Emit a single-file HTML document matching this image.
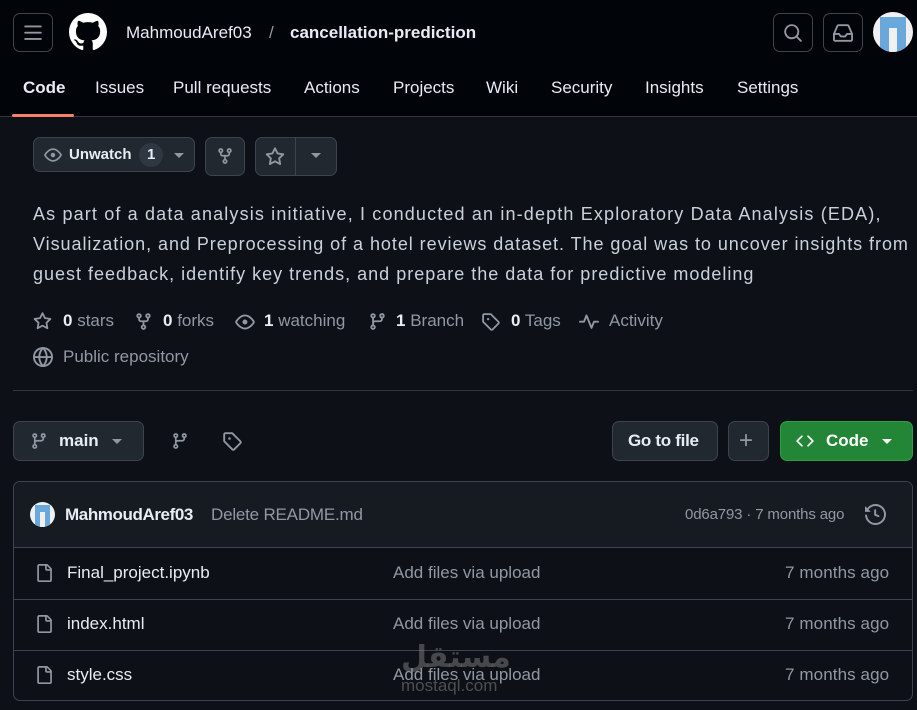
<!DOCTYPE html>
<html><head><meta charset="utf-8">
<style>
*{box-sizing:border-box;margin:0;padding:0}
body{width:917px;height:710px;overflow:hidden;background:#0d1117;color:#e6edf3;font-family:"Liberation Sans",sans-serif;position:relative}
.abs{position:absolute}
.hdr{position:absolute;left:0;top:0;width:917px;height:117px;background:#010409;border-bottom:1px solid #30363d}
.btn{position:absolute;border:1px solid #3d444d;border-radius:7px;background:#212830}
.hb{position:absolute;border:1px solid #3d444d;border-radius:7px;background:transparent}
svg{position:absolute}
.nav{position:absolute;top:78px;font-size:17px;color:#e6edf3}
.muted{color:#9198a1}
.t{position:absolute;white-space:nowrap}
</style></head><body>
<div class="hdr">
  <div class="hb" style="left:13px;top:13px;width:40px;height:39px"></div>
  <svg style="left:23px;top:23px" width="20" height="20" viewBox="0 0 16 16"><path fill="#9198a1" d="M1 2.75A.75.75 0 0 1 1.750 2h12.5a.75.75 0 0 1 0 1.5H1.75A.75.75 0 0 1 1 2.75Zm0 5A.75.75 0 0 1 1.75 7h12.5a.75.75 0 0 1 0 1.5H1.75A.75.75 0 0 1 1 7.75ZM1.75 12h12.5a.75.75 0 0 1 0 1.5H1.75a.75.75 0 0 1 0-1.5Z"/></svg>
  <svg style="left:69px;top:13px" width="38" height="38" viewBox="0 0 16 16"><path fill="#fff" d="M8 0c4.42 0 8 3.58 8 8a8.013 8.013 0 0 1-5.45 7.590c-.4.08-.55-.17-.55-.38 0-.27.01-1.130.01-2.2 0-.75-.25-1.23-.54-1.48 1.78-.2 3.650-.88 3.650-3.950 0-.88-.31-1.590-.82-2.150.08-.2.36-1.020-.08-2.120 0 0-.67-.22-2.2.82-.64-.18-1.320-.27-2-.27-.68 0-1.360.09-2 .27-1.530-1.030-2.2-.82-2.2-.82-.44 1.1-.16 1.920-.08 2.120-.51.56-.82 1.280-.82 2.150 0 3.060 1.860 3.750 3.640 3.950-.23.2-.44.55-.51 1.070-.46.21-1.610.55-2.330-.66-.15-.24-.6-.83-1.230-.82-.67.01-.27.38.01.53.34.19.73.9.82 1.130.16.45.68 1.310 2.690.94 0 .67.01 1.3.01 1.490 0 .21-.15.45-.55.38A7.995 7.995 0 0 1 0 8c0-4.420 3.580-8 8-8Z"/></svg>
  <div class="t" style="left:126px;top:23px;font-size:17px">MahmoudAref03</div>
  <div class="t muted" style="left:269px;top:23px;font-size:17px">/</div>
  <div class="t" style="left:290px;top:23px;font-size:17px;font-weight:bold">cancellation-prediction</div>
  <div class="hb" style="left:773px;top:13px;width:40px;height:39px"></div>
  <svg style="left:783px;top:23px" width="20" height="20" viewBox="0 0 16 16"><path fill="#9198a1" d="M10.68 11.74a6 6 0 0 1-7.922-8.982 6 6 0 0 1 8.982 7.922l3.04 3.04a.749.749 0 1 1-1.06 1.06l-3.04-3.04ZM11.5 7a4.499 4.499 0 1 0-8.997 0A4.499 4.499 0 0 0 11.5 7Z"/></svg>
  <div class="hb" style="left:823px;top:13px;width:40px;height:39px"></div>
  <svg style="left:833px;top:23px" width="20" height="20" viewBox="0 0 16 16"><path fill="#9198a1" d="M2.8 2.06A1.75 1.75 0 0 1 4.41 1h7.18c.7 0 1.333.417 1.61 1.06l2.74 6.395c.04.093.06.194.06.295v4.5A1.75 1.75 0 0 1 14.25 15H1.75A1.75 1.75 0 0 1 0 13.25v-4.5c0-.101.02-.202.06-.295Zm1.61.44a.25.25 0 0 0-.23.152L1.887 8H4.75a.75.75 0 0 1 .6.3L6.625 10h2.75l1.275-1.7a.75.75 0 0 1 .6-.3h2.863L11.82 2.652a.25.25 0 0 0-.23-.152Zm10.09 7h-2.875l-1.275 1.7a.75.75 0 0 1-.6.3h-3.5a.75.75 0 0 1-.6-.3L4.375 9.5H1.5v3.75c0 .138.112.25.25.25h12.5a.25.25 0 0 0 .25-.25Z"/></svg>
  <div class="abs" style="left:873px;top:12px;width:40px;height:40px;border-radius:50%;background:#f0f0f0;overflow:hidden">
    <div class="abs" style="left:7px;top:5px;width:26px;height:35px;background:#6aa7db"></div>
    <div class="abs" style="left:16px;top:16px;width:8px;height:24px;background:#f0f0f0"></div>
  </div>
  <div class="nav" style="left:23px;font-weight:bold">Code</div>
  <div class="nav" style="left:95px">Issues</div>
  <div class="nav" style="left:173px">Pull requests</div>
  <div class="nav" style="left:304px">Actions</div>
  <div class="nav" style="left:393px">Projects</div>
  <div class="nav" style="left:486px">Wiki</div>
  <div class="nav" style="left:551px">Security</div>
  <div class="nav" style="left:645px">Insights</div>
  <div class="nav" style="left:737px">Settings</div>
  <div class="abs" style="left:12px;top:114px;width:62px;height:3px;background:#f78166;border-radius:2px"></div>
</div>

<div class="btn" style="left:33px;top:137px;width:162px;height:35px"></div>
<svg style="left:44px;top:146px" width="18" height="18" viewBox="0 0 16 16"><path fill="#9198a1" d="M8 2c1.981 0 3.671.992 4.933 2.078 1.27 1.091 2.187 2.345 2.637 3.023a1.62 1.62 0 0 1 0 1.798c-.45.678-1.367 1.932-2.637 3.023C11.67 13.008 9.981 14 8 14c-1.981 0-3.671-.992-4.933-2.078C1.797 10.83.88 9.576.43 8.898a1.62 1.62 0 0 1 0-1.798c.45-.677 1.367-1.931 2.637-3.022C4.33 2.992 6.019 2 8 2ZM1.679 7.932a.12.12 0 0 0 0 .136c.411.622 1.241 1.75 2.366 2.717C5.176 11.758 6.527 12.5 8 12.5c1.473 0 2.825-.742 3.955-1.715 1.124-.967 1.954-2.096 2.366-2.717a.12.12 0 0 0 0-.136c-.412-.621-1.242-1.750-2.366-2.717C10.824 4.242 9.473 3.5 8 3.5c-1.473 0-2.825.742-3.955 1.715-1.124.967-1.954 2.096-2.366 2.717ZM8 10a2 2 0 1 1-.001-3.999A2 2 0 0 1 8 10Z"/></svg>
<div class="t" style="left:69px;top:146px;font-size:15px;font-weight:bold">Unwatch</div>
<div class="abs" style="left:139px;top:143px;width:24px;height:24px;border-radius:12px;background:#2f3742"></div>
<div class="t" style="left:147px;top:146px;font-size:15px;font-weight:bold">1</div>
<div class="abs" style="left:174px;top:153px;border-left:5px solid transparent;border-right:5px solid transparent;border-top:5px solid #9198a1"></div>
<div class="btn" style="left:205px;top:137px;width:40px;height:39px"></div>
<svg style="left:216px;top:147px" width="18" height="18" viewBox="0 0 16 16"><path fill="#9198a1" d="M5 5.372v.878c0 .414.336.75.75.75h4.5a.75.75 0 0 0 .75-.75v-.878a2.25 2.25 0 1 1 1.5 0v.878a2.25 2.25 0 0 1-2.25 2.25h-1.5v2.128a2.251 2.251 0 1 1-1.5 0V8.5h-1.5A2.25 2.25 0 0 1 3.5 6.25v-.878a2.25 2.25 0 1 1 1.5 0ZM5 3.25a.75.75 0 1 0-1.5 0 .75.75 0 0 0 1.5 0Zm6.75.75a.75.75 0 1 0 0-1.5.75.75 0 0 0 0 1.5Zm-3 8.75a.75.75 0 1 0-1.5 0 .75.75 0 0 0 1.5 0Z"/></svg>
<div class="btn" style="left:255px;top:137px;width:82px;height:39px"></div>
<div class="abs" style="left:295px;top:138px;width:1px;height:37px;background:#3d444d"></div>
<svg style="left:265px;top:147px" width="20" height="20" viewBox="0 0 16 16"><path fill="#9198a1" d="M8 .25a.75.75 0 0 1 .673.418l1.882 3.815 4.21.612a.75.75 0 0 1 .416 1.279l-3.046 2.97.719 4.192a.751.751 0 0 1-1.088.791L8 12.347l-3.766 1.98a.75.75 0 0 1-1.088-.79l.72-4.194L.818 6.374a.75.75 0 0 1 .416-1.28l4.21-.611L7.327.668A.75.75 0 0 1 8 .25Zm0 2.445L6.615 5.5a.75.75 0 0 1-.564.41l-3.097.45 2.24 2.184a.75.75 0 0 1 .216.664l-.528 3.084 2.769-1.456a.75.75 0 0 1 .698 0l2.77 1.456-.53-3.084a.75.75 0 0 1 .216-.664l2.24-2.183-3.096-.45a.75.75 0 0 1-.564-.41L8 2.694Z"/></svg>
<div class="abs" style="left:311px;top:153px;border-left:5px solid transparent;border-right:5px solid transparent;border-top:5px solid #9198a1"></div>

<div class="abs" style="left:33px;top:199px;font-size:18px;line-height:30px;color:#c9d1d9;white-space:nowrap">
<div style="letter-spacing:1.15px">As part of a data analysis initiative, I conducted an in-depth Exploratory Data Analysis (EDA),</div>
<div style="letter-spacing:0.95px">Visualization, and Preprocessing of a hotel reviews dataset. The goal was to uncover insights from</div>
<div style="letter-spacing:1.0px">guest feedback, identify key trends, and prepare the data for predictive modeling</div>
</div>

<div style="position:absolute;left:33px;top:311px;font-size:17px;color:#9198a1;white-space:nowrap">
<svg style="left:0;top:1px" width="19" height="19" viewBox="0 0 16 16"><path fill="#9198a1" d="M8 .25a.75.75 0 0 1 .673.418l1.882 3.815 4.21.612a.75.75 0 0 1 .416 1.279l-3.046 2.97.719 4.192a.751.751 0 0 1-1.088.791L8 12.347l-3.766 1.98a.75.75 0 0 1-1.088-.79l.72-4.194L.818 6.374a.75.75 0 0 1 .416-1.28l4.21-.611L7.327.668A.75.75 0 0 1 8 .25Zm0 2.445L6.615 5.5a.75.75 0 0 1-.564.41l-3.097.45 2.24 2.184a.75.75 0 0 1 .216.664l-.528 3.084 2.769-1.456a.75.75 0 0 1 .698 0l2.77 1.456-.53-3.084a.75.75 0 0 1 .216-.664l2.24-2.183-3.096-.45a.75.75 0 0 1-.564-.41L8 2.694Z"/></svg>
<span class="t" style="left:30px"><b style="color:#e6edf3">0</b> stars</span>
<svg style="left:101px;top:1px" width="19" height="19" viewBox="0 0 16 16"><path fill="#9198a1" d="M5 5.372v.878c0 .414.336.75.75.75h4.5a.75.75 0 0 0 .75-.75v-.878a2.25 2.25 0 1 1 1.5 0v.878a2.25 2.25 0 0 1-2.25 2.25h-1.5v2.128a2.251 2.251 0 1 1-1.5 0V8.5h-1.5A2.25 2.25 0 0 1 3.5 6.25v-.878a2.25 2.25 0 1 1 1.5 0ZM5 3.25a.75.75 0 1 0-1.5 0 .75.75 0 0 0 1.5 0Zm6.75.75a.75.75 0 1 0 0-1.5.75.75 0 0 0 0 1.5Zm-3 8.75a.75.75 0 1 0-1.5 0 .75.75 0 0 0 1.5 0Z"/></svg>
<span class="t" style="left:130px"><b style="color:#e6edf3">0</b> forks</span>
<svg style="left:202px;top:1px" width="20" height="20" viewBox="0 0 16 16"><path fill="#9198a1" d="M8 2c1.981 0 3.671.992 4.933 2.078 1.27 1.091 2.187 2.345 2.637 3.023a1.62 1.62 0 0 1 0 1.798c-.45.678-1.367 1.932-2.637 3.023C11.67 13.008 9.981 14 8 14c-1.981 0-3.671-.992-4.933-2.078C1.797 10.83.88 9.576.43 8.898a1.62 1.62 0 0 1 0-1.798c.45-.677 1.367-1.931 2.637-3.022C4.33 2.992 6.019 2 8 2ZM1.679 7.932a.12.12 0 0 0 0 .136c.411.622 1.241 1.75 2.366 2.717C5.176 11.758 6.527 12.5 8 12.5c1.473 0 2.825-.742 3.955-1.715 1.124-.967 1.954-2.096 2.366-2.717a.12.12 0 0 0 0-.136c-.412-.621-1.242-1.750-2.366-2.717C10.824 4.242 9.473 3.5 8 3.5c-1.473 0-2.825.742-3.955 1.715-1.124.967-1.954 2.096-2.366 2.717ZM8 10a2 2 0 1 1-.001-3.999A2 2 0 0 1 8 10Z"/></svg>
<span class="t" style="left:231px"><b style="color:#e6edf3">1</b> watching</span>
<svg style="left:335px;top:1px" width="19" height="19" viewBox="0 0 16 16"><path fill="#9198a1" d="M9.5 3.25a2.25 2.25 0 1 1 3 2.122V6A2.5 2.5 0 0 1 10 8.5H6a1 1 0 0 0-1 1v1.128a2.251 2.251 0 1 1-1.5 0V5.372a2.25 2.25 0 1 1 1.5 0v1.836A2.493 2.493 0 0 1 6 7h4a1 1 0 0 0 1-1v-.628A2.25 2.25 0 0 1 9.5 3.25Zm-6 0a.75.75 0 1 0 1.5 0 .75.75 0 0 0-1.5 0Zm8.25-.75a.75.75 0 1 0 0 1.5.75.75 0 0 0 0-1.5ZM4.25 12a.75.75 0 1 0 0 1.5.75.75 0 0 0 0-1.5Z"/></svg>
<span class="t" style="left:363px"><b style="color:#e6edf3">1</b> Branch</span>
<svg style="left:448px;top:1px" width="19" height="19" viewBox="0 0 16 16"><path fill="#9198a1" d="M1 7.775V2.75C1 1.784 1.784 1 2.75 1h5.025c.464 0 .91.184 1.238.513l6.25 6.25a1.75 1.75 0 0 1 0 2.474l-5.026 5.026a1.75 1.75 0 0 1-2.474 0l-6.25-6.25A1.752 1.752 0 0 1 1 7.775Zm1.5 0c0 .066.026.13.073.177l6.25 6.25a.25.25 0 0 0 .354 0l5.025-5.025a.25.25 0 0 0 0-.354l-6.25-6.25a.25.25 0 0 0-.177-.073H2.75a.25.25 0 0 0-.25.25ZM6 5a1 1 0 1 1 0 2 1 1 0 0 1 0-2Z"/></svg>
<span class="t" style="left:478px"><b style="color:#e6edf3">0</b> Tags</span>
<svg style="left:546px;top:1px" width="20" height="20" viewBox="0 0 16 16"><path fill="#9198a1" d="M6 2c.306 0 .582.187.696.471L10 10.731l1.304-3.260A.751.751 0 0 1 12 7h3.25a.75.75 0 0 1 0 1.5h-2.742l-1.812 4.528a.751.751 0 0 1-1.392 0L6 4.77 4.696 8.030A.75.75 0 0 1 4 8.5H.75a.75.75 0 0 1 0-1.5h2.742l1.812-4.529A.751.751 0 0 1 6 2Z"/></svg>
<span class="t" style="left:576px">Activity</span>
</div>
<svg style="left:33px;top:347px" width="20" height="20" viewBox="0 0 16 16"><path fill="#9198a1" d="M8 0a8 8 0 1 1 0 16A8 8 0 0 1 8 0ZM5.78 8.75a9.64 9.64 0 0 0 1.363 4.177c.255.426.542.832.857 1.215.245-.296.551-.705.857-1.215A9.64 9.64 0 0 0 10.22 8.75Zm4.44-1.5a9.64 9.64 0 0 0-1.363-4.177c-.307-.51-.612-.919-.857-1.215a9.927 9.927 0 0 0-.857 1.215A9.64 9.64 0 0 0 5.780 7.25Zm-5.944 1.5H1.543a6.507 6.507 0 0 0 4.666 5.5c-.123-.181-.24-.365-.352-.552-.715-1.192-1.437-2.874-1.581-4.948Zm-2.733-1.5h2.733c.144-2.074.866-3.756 1.58-4.948.12-.197.237-.381.353-.552a6.507 6.507 0 0 0-4.666 5.5Zm10.181 1.5c-.144 2.074-.866 3.756-1.58 4.948-.12.197-.237.381-.353.552a6.507 6.507 0 0 0 4.666-5.5Zm2.733-1.5a6.507 6.507 0 0 0-4.666-5.5c.123.181.24.365.353.552.714 1.192 1.436 2.874 1.58 4.948Z"/></svg>
<div class="t muted" style="left:63px;top:347px;font-size:17px">Public repository</div>
<div class="abs" style="left:13px;top:390px;width:900px;height:1px;background:#30363d"></div>

<div class="btn" style="left:13px;top:421px;width:131px;height:40px"></div>
<svg style="left:30px;top:432px" width="18" height="18" viewBox="0 0 16 16"><path fill="#9198a1" d="M9.5 3.25a2.25 2.25 0 1 1 3 2.122V6A2.5 2.5 0 0 1 10 8.5H6a1 1 0 0 0-1 1v1.128a2.251 2.251 0 1 1-1.5 0V5.372a2.25 2.25 0 1 1 1.5 0v1.836A2.493 2.493 0 0 1 6 7h4a1 1 0 0 0 1-1v-.628A2.25 2.25 0 0 1 9.5 3.25Zm-6 0a.75.75 0 1 0 1.5 0 .75.75 0 0 0-1.5 0Zm8.25-.75a.75.75 0 1 0 0 1.5.75.75 0 0 0 0-1.5ZM4.25 12a.75.75 0 1 0 0 1.5.75.75 0 0 0 0-1.5Z"/></svg>
<div class="t" style="left:59px;top:431px;font-size:17px;font-weight:bold">main</div>
<div class="abs" style="left:112px;top:439px;border-left:5px solid transparent;border-right:5px solid transparent;border-top:5px solid #9198a1"></div>
<svg style="left:171px;top:432px" width="18" height="18" viewBox="0 0 16 16"><path fill="#9198a1" d="M9.5 3.25a2.25 2.25 0 1 1 3 2.122V6A2.5 2.5 0 0 1 10 8.5H6a1 1 0 0 0-1 1v1.128a2.251 2.251 0 1 1-1.5 0V5.372a2.25 2.25 0 1 1 1.5 0v1.836A2.493 2.493 0 0 1 6 7h4a1 1 0 0 0 1-1v-.628A2.25 2.25 0 0 1 9.5 3.25Zm-6 0a.75.75 0 1 0 1.5 0 .75.75 0 0 0-1.5 0Zm8.25-.75a.75.75 0 1 0 0 1.5.75.75 0 0 0 0-1.5ZM4.25 12a.75.75 0 1 0 0 1.5.75.75 0 0 0 0-1.5Z"/></svg>
<svg style="left:222px;top:431px" width="20" height="20" viewBox="0 0 16 16"><path fill="#9198a1" d="M1 7.775V2.75C1 1.784 1.784 1 2.75 1h5.025c.464 0 .91.184 1.238.513l6.25 6.25a1.75 1.75 0 0 1 0 2.474l-5.026 5.026a1.75 1.75 0 0 1-2.474 0l-6.25-6.25A1.752 1.752 0 0 1 1 7.775Zm1.5 0c0 .066.026.13.073.177l6.25 6.25a.25.25 0 0 0 .354 0l5.025-5.025a.25.25 0 0 0 0-.354l-6.25-6.25a.25.25 0 0 0-.177-.073H2.75a.25.25 0 0 0-.25.25ZM6 5a1 1 0 1 1 0 2 1 1 0 0 1 0-2Z"/></svg>
<div class="btn" style="left:612px;top:421px;width:106px;height:40px"></div>
<div class="t" style="left:628px;top:431px;font-size:17px;font-weight:bold;letter-spacing:-0.3px">Go to file</div>
<div class="btn" style="left:728px;top:421px;width:41px;height:40px"></div>
<div class="t muted" style="left:739px;top:427px;font-size:24px">+</div>
<div class="abs" style="left:780px;top:421px;width:133px;height:40px;border-radius:7px;background:#238636;border:1px solid #2ea043"></div>
<svg style="left:795px;top:432px" width="20" height="18" viewBox="0 0 16 16"><path fill="#fff" d="m11.28 3.22 4.25 4.25a.75.75 0 0 1 0 1.06l-4.25 4.25a.749.749 0 0 1-1.275-.326.749.749 0 0 1 .215-.734L13.94 8l-3.72-3.72a.749.749 0 0 1 .326-1.275.749.749 0 0 1 .734.215Zm-6.56 0a.751.751 0 0 1 1.042.018.751.751 0 0 1 .018 1.042L2.06 8l3.72 3.72a.749.749 0 0 1-.326 1.275.749.749 0 0 1-.734-.215L.47 8.53a.75.75 0 0 1 0-1.06Z"/></svg>
<div class="t" style="left:826px;top:431px;font-size:17px;font-weight:bold;color:#fff">Code</div>
<div class="abs" style="left:882px;top:439px;border-left:5px solid transparent;border-right:5px solid transparent;border-top:5px solid #fff"></div>

<div class="abs" style="left:13px;top:481px;width:900px;height:220px;border:1px solid #3d444d;border-radius:7px;overflow:hidden">
  <div class="abs" style="left:0;top:0;width:898px;height:66px;background:#161b22;border-bottom:1px solid #3d444d"></div>
  <div class="abs" style="left:0;top:117px;width:898px;height:1px;background:#3d444d"></div>
  <div class="abs" style="left:0;top:168px;width:898px;height:1px;background:#3d444d"></div>
</div>
<div class="abs" style="left:30px;top:502px;width:25px;height:25px;border-radius:50%;background:#f0f0f0;overflow:hidden">
  <div class="abs" style="left:5px;top:3px;width:15px;height:22px;background:#6aa7db"></div>
  <div class="abs" style="left:10px;top:10px;width:5px;height:15px;background:#f0f0f0"></div>
</div>
<div class="t" style="left:65px;top:505px;font-size:17px;font-weight:bold;letter-spacing:-0.4px">MahmoudAref03</div>
<div class="t muted" style="left:211px;top:505px;font-size:17px;letter-spacing:-0.2px">Delete README.md</div>
<div class="t muted" style="left:685px;top:506px;font-size:15px;letter-spacing:-0.15px">0d6a793 · 7 months ago</div>
<svg style="left:865px;top:504px" width="21" height="21" viewBox="0 0 16 16"><path fill="#9198a1" d="m.427 1.927 1.215 1.215a8.002 8.002 0 1 1-1.6 5.685.75.75 0 1 1 1.493-.154 6.5 6.5 0 1 0 1.18-4.458l1.358 1.358A.25.25 0 0 1 3.896 6H.25A.25.25 0 0 1 0 5.75V2.104a.25.25 0 0 1 .427-.177ZM7.75 4a.75.75 0 0 1 .75.75v2.992l2.028.812a.75.75 0 0 1-.557 1.392l-2.5-1A.751.751 0 0 1 7 8.25v-3.5A.75.75 0 0 1 7.75 4Z"/></svg>

<div style="position:absolute;left:0;top:547px;width:917px">
 <svg style="left:35px;top:16px" width="18" height="20" viewBox="0 0 16 16"><path fill="#9198a1" d="M2 1.75C2 .784 2.784 0 3.75 0h6.586c.464 0 .909.184 1.237.513l2.914 2.914c.329.328.513.773.513 1.237v9.586A1.75 1.75 0 0 1 13.25 16h-9.5A1.75 1.75 0 0 1 2 14.25Zm1.75-.25a.25.25 0 0 0-.25.25v12.5c0 .138.112.25.25.25h9.5a.25.25 0 0 0 .25-.25V6h-2.75A1.75 1.75 0 0 1 9 4.25V1.5Zm6.75.062V4.25c0 .138.112.25.25.25h2.688l-.011-.013-2.914-2.914-.013-.011Z"/></svg>
 <div class="t" style="left:67px;top:16px;font-size:17px">Final_project.ipynb</div>
 <div class="t muted" style="left:393px;top:16px;font-size:17px">Add files via upload</div>
 <div class="t muted" style="left:785px;top:16px;font-size:17px;letter-spacing:0.1px">7 months ago</div>
</div>
<div style="position:absolute;left:0;top:598px;width:917px">
 <svg style="left:35px;top:16px" width="18" height="20" viewBox="0 0 16 16"><path fill="#9198a1" d="M2 1.75C2 .784 2.784 0 3.75 0h6.586c.464 0 .909.184 1.237.513l2.914 2.914c.329.328.513.773.513 1.237v9.586A1.75 1.75 0 0 1 13.25 16h-9.5A1.75 1.75 0 0 1 2 14.25Zm1.75-.25a.25.25 0 0 0-.25.25v12.5c0 .138.112.25.25.25h9.5a.25.25 0 0 0 .25-.25V6h-2.75A1.75 1.75 0 0 1 9 4.25V1.5Zm6.75.062V4.25c0 .138.112.25.25.25h2.688l-.011-.013-2.914-2.914-.013-.011Z"/></svg>
 <div class="t" style="left:67px;top:16px;font-size:17px">index.html</div>
 <div class="t muted" style="left:393px;top:16px;font-size:17px">Add files via upload</div>
 <div class="t muted" style="left:785px;top:16px;font-size:17px;letter-spacing:0.1px">7 months ago</div>
</div>
<div style="position:absolute;left:0;top:649px;width:917px">
 <svg style="left:35px;top:16px" width="18" height="20" viewBox="0 0 16 16"><path fill="#9198a1" d="M2 1.75C2 .784 2.784 0 3.75 0h6.586c.464 0 .909.184 1.237.513l2.914 2.914c.329.328.513.773.513 1.237v9.586A1.75 1.75 0 0 1 13.25 16h-9.5A1.75 1.75 0 0 1 2 14.25Zm1.75-.25a.25.25 0 0 0-.25.25v12.5c0 .138.112.25.25.25h9.5a.25.25 0 0 0 .25-.25V6h-2.75A1.75 1.75 0 0 1 9 4.25V1.5Zm6.75.062V4.25c0 .138.112.25.25.25h2.688l-.011-.013-2.914-2.914-.013-.011Z"/></svg>
 <div class="t" style="left:67px;top:16px;font-size:17px">style.css</div>
 <div class="t muted" style="left:393px;top:16px;font-size:17px">Add files via upload</div>
 <div class="t muted" style="left:785px;top:16px;font-size:17px;letter-spacing:0.1px">7 months ago</div>
</div>
<div class="t" style="left:401px;top:640px;font-size:30px;font-weight:bold;color:rgba(140,140,140,0.45);font-family:'Liberation Sans','DejaVu Sans',sans-serif">مستقل</div>
<div class="t" style="left:401px;top:676px;font-size:17px;color:rgba(140,140,140,0.5)">mostaql.com</div>
</body></html>
